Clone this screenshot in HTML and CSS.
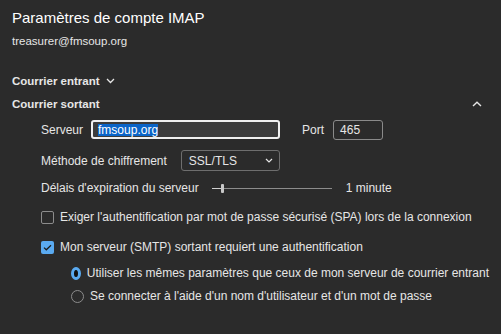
FILE: index.html
```html
<!DOCTYPE html>
<html lang="fr">
<head>
    <meta charset="UTF-8">
    <title>Paramètres de compte IMAP</title>
    <link rel="stylesheet" href="styles.css">
</head>
<body>
  <div class="panel">
    <h1 class="title">Paramètres de compte IMAP</h1>
    <div class="account">treasurer@fmsoup.org</div>

    <div class="section-head incoming">
      <span>Courrier entrant</span>
      <svg class="chev" width="9" height="6" viewBox="0 0 9 6"><path d="M1 1 L4.5 4.5 L8 1" fill="none" stroke="#e6e6e6" stroke-width="1.3"/></svg>
    </div>

    <div class="section-head outgoing">
      <span>Courrier sortant</span>
      <svg class="chev-up" width="10" height="6" viewBox="0 0 10 6"><path d="M1 5 L5 1.2 L9 5" fill="none" stroke="#e6e6e6" stroke-width="1.4"/></svg>
    </div>

    <div class="section-body">
      <div class="row server-row">
        <span class="lbl">Serveur</span>
        <div class="field focused"><span class="sel">fmsoup.org</span></div>
        <span class="lbl port-lbl">Port</span>
        <div class="field port">465</div>
      </div>

      <div class="row crypt-row">
        <span class="lbl">Méthode de chiffrement</span>
        <div class="select">
          <span>SSL/TLS</span>
          <svg width="8" height="5" viewBox="0 0 8 5"><path d="M1 1 L4 4 L7 1" fill="none" stroke="#e6e6e6" stroke-width="1.2"/></svg>
        </div>
      </div>

      <div class="row timeout-row">
        <span class="lbl">Délais d'expiration du serveur</span>
        <div class="slider">
          <div class="track-done"></div>
          <div class="thumb"></div>
          <div class="track"></div>
        </div>
        <span class="value">1 minute</span>
      </div>

      <div class="check spa">
        <span class="box"></span>
        <span>Exiger l'authentification par mot de passe sécurisé (SPA) lors de la connexion</span>
      </div>

      <div class="check smtp">
        <span class="box checked">
          <svg width="9" height="7" viewBox="0 0 9 7"><path d="M1 3.6 L3.3 5.8 L8 1.2" fill="none" stroke="#1a1a1a" stroke-width="1.2"/></svg>
        </span>
        <span>Mon serveur (SMTP) sortant requiert une authentification</span>
      </div>

      <div class="radios">
        <div class="radio same">
          <span class="dot on"></span>
          <span>Utiliser les mêmes paramètres que ceux de mon serveur de courrier entrant</span>
        </div>
        <div class="radio login">
          <span class="dot"></span>
          <span>Se connecter à l'aide d'un nom d'utilisateur et d'un mot de passe</span>
        </div>
      </div>
    </div>
  </div>
</body>
</html>
```

FILE: styles.css
```css
    body {
        margin: 0;
        background-color: #2b2b2b;
        color: #e6e6e6;
        font-family: 'Liberation Sans', Arial, sans-serif;
        font-size: 12px;
        white-space: nowrap;
    }
    .panel {
        display: flex;
        flex-direction: column;
        padding: 8px 12px 0 12px;
    }
    .title {
        margin: 0;
        font-size: 15px;
        font-weight: normal;
        line-height: 20px;
        color: #ffffff;
    }
    .account {
        margin-top: 5px;
        line-height: 16px;
        font-size: 11.5px;
    }
    .section-head {
        display: flex;
        align-items: center;
        font-weight: bold;
        font-size: 11.5px;
        line-height: 16px;
    }
    .incoming {
        margin-top: 24px;
    }
    .incoming .chev {
        margin-left: 6px;
    }
    .outgoing {
        margin-top: 7px;
        justify-content: space-between;
    }
    .outgoing .chev-up {
        margin-right: 7px;
    }
    .section-body {
        display: flex;
        flex-direction: column;
        padding-left: 29px;
    }
    .row {
        display: flex;
        align-items: center;
    }
    .server-row {
        margin-top: 8px;
        height: 19px;
    }
    .field {
        box-sizing: border-box;
        height: 19px;
        border-radius: 3px;
        display: flex;
        align-items: center;
    }
    .focused {
        margin-left: 8px;
        width: 189px;
        border: 2px solid #f0f0f0;
        background-color: #3c3c3c;
        padding-left: 5px;
    }
    .sel {
        background-color: #0a64c8;
        color: #ffffff;
        line-height: 12px;
    }
    .port-lbl {
        margin-left: 22px;
    }
    .port {
        margin-left: 9px;
        width: 50px;
        height: 20px;
        border: 1px solid #8a8a8a;
        padding-left: 6px;
    }
    .crypt-row {
        margin-top: 11px;
        height: 21px;
    }
    .select {
        box-sizing: border-box;
        margin-left: 14px;
        width: 99px;
        height: 21px;
        border: 1px solid #6e6e6e;
        border-radius: 3px;
        display: flex;
        align-items: center;
        justify-content: space-between;
        padding: 0 6px 0 7px;
    }
    .timeout-row {
        margin-top: 9px;
        height: 16px;
    }
    .slider {
        display: flex;
        align-items: center;
        margin-left: 13px;
        width: 120px;
        height: 10px;
    }
    .track-done {
        width: 9px;
        height: 1px;
        background-color: #d0d0d0;
    }
    .thumb {
        width: 3px;
        height: 9px;
        border-radius: 1px;
        background-color: #c8c8c8;
    }
    .track {
        flex: 1;
        height: 1px;
        background-color: #8c8c8c;
    }
    .value {
        margin-left: 14px;
    }
    .check {
        display: flex;
        align-items: center;
        height: 16px;
    }
    .check .box {
        box-sizing: border-box;
        width: 13px;
        height: 13px;
        border: 1px solid #8c8c8c;
        border-radius: 2px;
        margin-right: 6px;
        display: flex;
        align-items: center;
        justify-content: center;
    }
    .check .checked {
        border: none;
        background-color: #5aaaf0;
    }
    .spa {
        margin-top: 13px;
    }
    .smtp {
        margin-top: 14px;
    }
    .radios {
        display: flex;
        flex-direction: column;
        padding-left: 30px;
    }
    .radio {
        display: flex;
        align-items: center;
        height: 16px;
        margin-top: 7px;
    }
    .radio.same {
        margin-top: 10px;
    }
    .dot {
        box-sizing: border-box;
        width: 13px;
        height: 13px;
        border-radius: 50%;
        border: 1px solid #8c8c8c;
        margin-right: 6px;
    }
    .dot.on {
        border: 3.5px solid #5aaaf0;
        background-color: #111111;
    }
```
